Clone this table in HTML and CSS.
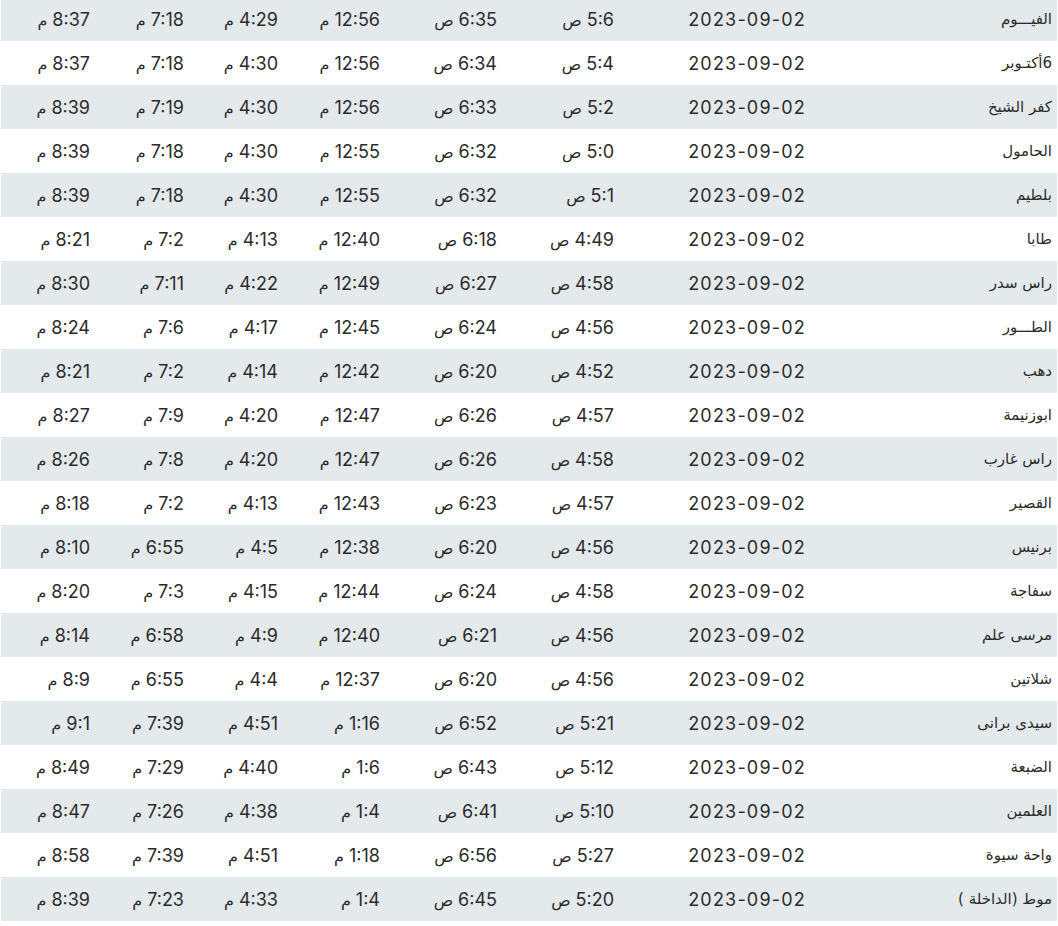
FILE: index.html
```html
<!DOCTYPE html>
<html lang="ar" dir="rtl">

<head>
    <meta charset="UTF-8">
    <meta name="viewport" content="width=device-width, initial-scale=1.0">
    <title>مواقيت الصلاة</title>
    <link rel="stylesheet" href="styles.css">
</head>

<body>
    <table class="prayer-table">
        <colgroup>
            <col class="col-city">
            <col class="col-date">
            <col class="col-fajr">
            <col class="col-sunrise">
            <col class="col-dhuhr">
            <col class="col-asr">
            <col class="col-maghrib">
            <col class="col-isha">
        </colgroup>
        <tbody>
            <tr><td class="city">الفيـــوم</td><td class="date">2023-09-02</td><td>5:6 <i>ص</i></td><td>6:35 <i>ص</i></td><td>12:56 <i>م</i></td><td>4:29 <i>م</i></td><td>7:18 <i>م</i></td><td>8:37 <i>م</i></td></tr>
            <tr><td class="city">6أكتـوبر</td><td class="date">2023-09-02</td><td>5:4 <i>ص</i></td><td>6:34 <i>ص</i></td><td>12:56 <i>م</i></td><td>4:30 <i>م</i></td><td>7:18 <i>م</i></td><td>8:37 <i>م</i></td></tr>
            <tr><td class="city">كفر الشيخ</td><td class="date">2023-09-02</td><td>5:2 <i>ص</i></td><td>6:33 <i>ص</i></td><td>12:56 <i>م</i></td><td>4:30 <i>م</i></td><td>7:19 <i>م</i></td><td>8:39 <i>م</i></td></tr>
            <tr><td class="city">الحامول</td><td class="date">2023-09-02</td><td>5:0 <i>ص</i></td><td>6:32 <i>ص</i></td><td>12:55 <i>م</i></td><td>4:30 <i>م</i></td><td>7:18 <i>م</i></td><td>8:39 <i>م</i></td></tr>
            <tr><td class="city">بلطيم</td><td class="date">2023-09-02</td><td>5:1 <i>ص</i></td><td>6:32 <i>ص</i></td><td>12:55 <i>م</i></td><td>4:30 <i>م</i></td><td>7:18 <i>م</i></td><td>8:39 <i>م</i></td></tr>
            <tr><td class="city">طابا</td><td class="date">2023-09-02</td><td>4:49 <i>ص</i></td><td>6:18 <i>ص</i></td><td>12:40 <i>م</i></td><td>4:13 <i>م</i></td><td>7:2 <i>م</i></td><td>8:21 <i>م</i></td></tr>
            <tr><td class="city">راس سدر</td><td class="date">2023-09-02</td><td>4:58 <i>ص</i></td><td>6:27 <i>ص</i></td><td>12:49 <i>م</i></td><td>4:22 <i>م</i></td><td>7:11 <i>م</i></td><td>8:30 <i>م</i></td></tr>
            <tr><td class="city">الطـــور</td><td class="date">2023-09-02</td><td>4:56 <i>ص</i></td><td>6:24 <i>ص</i></td><td>12:45 <i>م</i></td><td>4:17 <i>م</i></td><td>7:6 <i>م</i></td><td>8:24 <i>م</i></td></tr>
            <tr><td class="city">دهب</td><td class="date">2023-09-02</td><td>4:52 <i>ص</i></td><td>6:20 <i>ص</i></td><td>12:42 <i>م</i></td><td>4:14 <i>م</i></td><td>7:2 <i>م</i></td><td>8:21 <i>م</i></td></tr>
            <tr><td class="city">ابوزنيمة</td><td class="date">2023-09-02</td><td>4:57 <i>ص</i></td><td>6:26 <i>ص</i></td><td>12:47 <i>م</i></td><td>4:20 <i>م</i></td><td>7:9 <i>م</i></td><td>8:27 <i>م</i></td></tr>
            <tr><td class="city">راس غارب</td><td class="date">2023-09-02</td><td>4:58 <i>ص</i></td><td>6:26 <i>ص</i></td><td>12:47 <i>م</i></td><td>4:20 <i>م</i></td><td>7:8 <i>م</i></td><td>8:26 <i>م</i></td></tr>
            <tr><td class="city">القصير</td><td class="date">2023-09-02</td><td>4:57 <i>ص</i></td><td>6:23 <i>ص</i></td><td>12:43 <i>م</i></td><td>4:13 <i>م</i></td><td>7:2 <i>م</i></td><td>8:18 <i>م</i></td></tr>
            <tr><td class="city">برنيس</td><td class="date">2023-09-02</td><td>4:56 <i>ص</i></td><td>6:20 <i>ص</i></td><td>12:38 <i>م</i></td><td>4:5 <i>م</i></td><td>6:55 <i>م</i></td><td>8:10 <i>م</i></td></tr>
            <tr><td class="city">سفاجة</td><td class="date">2023-09-02</td><td>4:58 <i>ص</i></td><td>6:24 <i>ص</i></td><td>12:44 <i>م</i></td><td>4:15 <i>م</i></td><td>7:3 <i>م</i></td><td>8:20 <i>م</i></td></tr>
            <tr><td class="city">مرسى علم</td><td class="date">2023-09-02</td><td>4:56 <i>ص</i></td><td>6:21 <i>ص</i></td><td>12:40 <i>م</i></td><td>4:9 <i>م</i></td><td>6:58 <i>م</i></td><td>8:14 <i>م</i></td></tr>
            <tr><td class="city">شلاتين</td><td class="date">2023-09-02</td><td>4:56 <i>ص</i></td><td>6:20 <i>ص</i></td><td>12:37 <i>م</i></td><td>4:4 <i>م</i></td><td>6:55 <i>م</i></td><td>8:9 <i>م</i></td></tr>
            <tr><td class="city">سيدى برانى</td><td class="date">2023-09-02</td><td>5:21 <i>ص</i></td><td>6:52 <i>ص</i></td><td>1:16 <i>م</i></td><td>4:51 <i>م</i></td><td>7:39 <i>م</i></td><td>9:1 <i>م</i></td></tr>
            <tr><td class="city">الضبعة</td><td class="date">2023-09-02</td><td>5:12 <i>ص</i></td><td>6:43 <i>ص</i></td><td>1:6 <i>م</i></td><td>4:40 <i>م</i></td><td>7:29 <i>م</i></td><td>8:49 <i>م</i></td></tr>
            <tr><td class="city">العلمين</td><td class="date">2023-09-02</td><td>5:10 <i>ص</i></td><td>6:41 <i>ص</i></td><td>1:4 <i>م</i></td><td>4:38 <i>م</i></td><td>7:26 <i>م</i></td><td>8:47 <i>م</i></td></tr>
            <tr><td class="city">واحة سيوة</td><td class="date">2023-09-02</td><td>5:27 <i>ص</i></td><td>6:56 <i>ص</i></td><td>1:18 <i>م</i></td><td>4:51 <i>م</i></td><td>7:39 <i>م</i></td><td>8:58 <i>م</i></td></tr>
            <tr><td class="city">موط (الداخلة )</td><td class="date">2023-09-02</td><td>5:20 <i>ص</i></td><td>6:45 <i>ص</i></td><td>1:4 <i>م</i></td><td>4:33 <i>م</i></td><td>7:23 <i>م</i></td><td>8:39 <i>م</i></td></tr>
        </tbody>
    </table>
</body>

</html>
```

FILE: styles.css
```css
body {
    margin: 0;
    padding: 0;
    background-color: #fff;
    color: #2b2b2b;
    font-family: Inter, "DejaVu Sans", sans-serif;
    overflow: hidden;
}

.prayer-table {
    width: calc(100% - 2px);
    margin: -3px 1px 0;
    border-collapse: collapse;
    table-layout: fixed;
    font-size: 18px;
}

.prayer-table td {
    height: 44px;
    padding: 0 5px;
    text-align: right;
    white-space: nowrap;
    box-sizing: border-box;
}

.prayer-table tr:nth-child(odd) {
    background-color: #e4e9ec;
}

.prayer-table td.city {
    font-family: "DejaVu Sans", sans-serif;
    font-size: 15px;
}

.prayer-table td.date {
    letter-spacing: 1.2px;
    padding-left: 0;
    padding-right: 4px;
}

/* ص / م suffix */
.prayer-table td i {
    font-style: normal;
    font-family: "DejaVu Sans", sans-serif;
    font-size: 16px;
}

.col-city { width: 247px; }
.col-date { width: 191px; }
.col-fajr { width: 117px; }
.col-sunrise { width: 117px; }
.col-dhuhr { width: 102px; }
.col-asr { width: 94px; }
.col-maghrib { width: 94px; }
.col-isha { width: 94px; }
```
